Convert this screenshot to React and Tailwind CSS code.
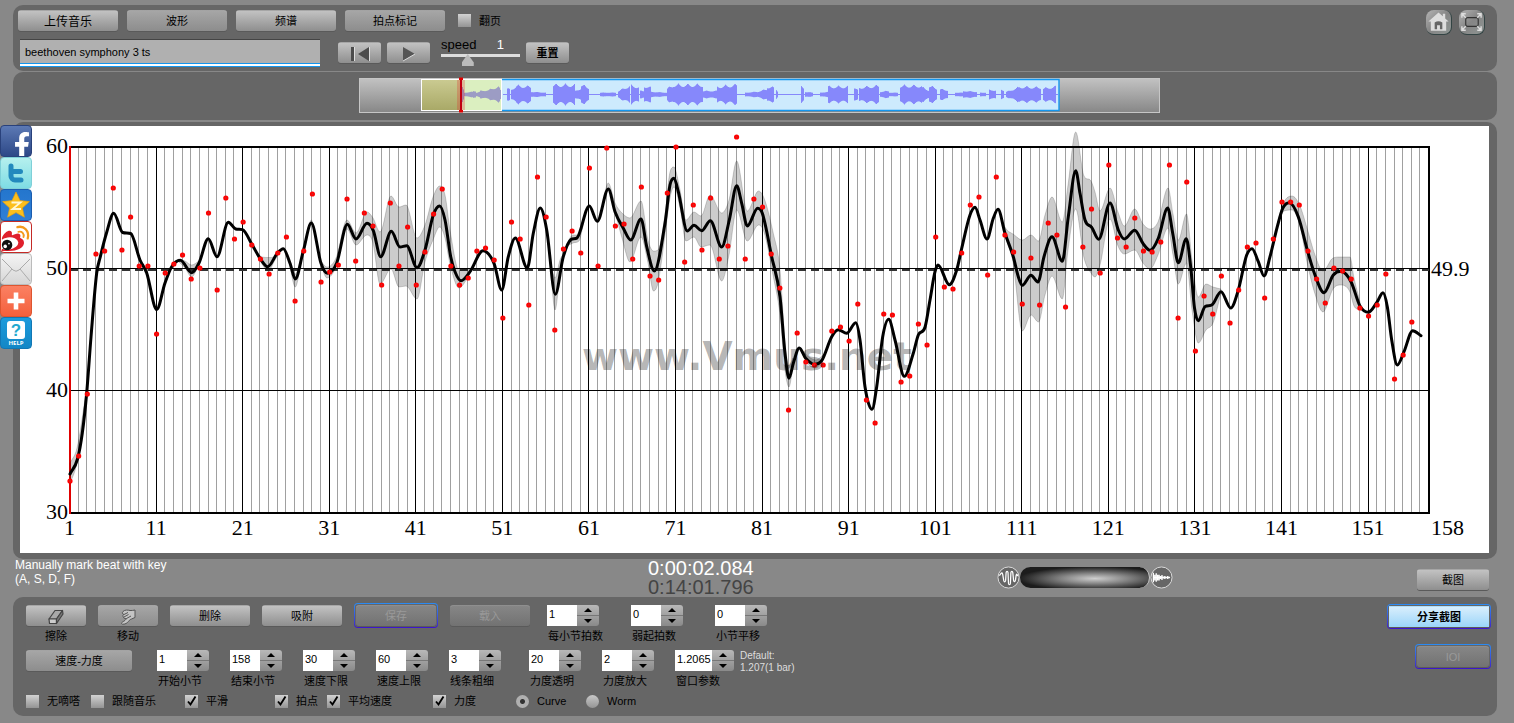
import { useId, useState } from "react";
import clsx from "clsx";
import { FaFacebookF } from "react-icons/fa";

/* ---------- chart data (y values are chart coordinates) ---------- */

const BEATS = [
  481, 456, 394, 254, 251, 188, 250, 217, 266, 266, 334, 273, 264, 255, 279, 268, 213, 290, 198, 239,
  222, 245, 259, 274, 253, 237, 301, 251, 194, 282, 272, 265, 199, 261, 213, 226, 285, 203, 266, 227,
  285, 252, 214, 189, 266, 285, 278, 251, 248, 260, 318, 222, 239, 305, 177, 217, 330, 249, 231, 253,
  168, 266, 148, 226, 224, 259, 187, 276, 280, 193, 147, 262, 205, 250, 198, 259, 246, 137, 259, 199,
  207, 254, 288, 410, 333, 362, 365, 365, 331, 327, 341, 304, 400, 423, 314, 315, 382, 376, 324, 345,
  237, 287, 289, 253, 205, 197, 275, 177, 235, 252, 304, 258, 305, 223, 235, 307, null, 247, 209, 273,
  165, 238, 247, 218, 251, 252, 242, 165, 318, 182, 351, 296, 314, 276, 323, 290, 247, 243, 298, 239,
  202, 202, 205, 251, 279, 303, 268, 271, 279, 308, 316, 305, 274, 379, 355, 322,
];

const CURVE = [
  [70, 474], [77.5, 459], [82.3, 433], [86.7, 393], [91, 337], [96.7, 273], [100, 258], [106.5, 233],
  [113.7, 213.3], [122.7, 232.5], [130.7, 233.5], [140, 260], [146.7, 273], [156.7, 309.5], [165, 283],
  [171.7, 266.7], [180.3, 260.3], [191.7, 272.7], [199, 263], [208.3, 238.7], [217, 256.7], [228.3, 222.3],
  [235.7, 229], [242.5, 229.6], [251.7, 244], [260.7, 259.3], [267.7, 266.7], [277.3, 253.3], [283.3, 248.7],
  [290, 263.3], [295.3, 279], [303.3, 251], [311.3, 223], [321, 263.3], [327.3, 273.3], [336.7, 263],
  [347.3, 224.3], [356, 239], [367, 223.3], [373.3, 230.7], [380.7, 256.7], [391.3, 231.3], [400, 247],
  [406.7, 245.7], [417, 267.7], [425, 250], [433.3, 215], [439.7, 206], [445, 220], [450.7, 256.7],
  [455, 271.7], [461, 280.7], [470, 271.7], [483, 250.7], [494, 263.3], [501.7, 290], [508.3, 256.7],
  [515.3, 238], [527.3, 268], [533.3, 233.3], [540.3, 208], [546.7, 230], [555.3, 294.3], [563.3, 256.7],
  [571, 239.5], [577, 238], [589.3, 206], [597.3, 221.3], [608.3, 189], [615, 211.7], [623.3, 228.3],
  [630.7, 240], [641, 219], [646.7, 246.7], [654.3, 271], [665, 223.3], [670, 185], [674, 178.3],
  [678.3, 191.7], [687.3, 231], [694, 225.3], [701.7, 230.7], [710.3, 220.7], [721.7, 247], [729.3, 220],
  [736.7, 185.7], [741.7, 203.3], [747.3, 226], [757.7, 208.3], [762.3, 213.3], [771.7, 256.7],
  [780, 296.7], [785, 353.3], [789, 378.3], [793.3, 363.3], [799.3, 348], [805.7, 358.3], [814.3, 364.3],
  [821.7, 360.7], [831.7, 336.7], [838.3, 329.7], [846.7, 333.3], [855.7, 322.7], [860, 340],
  [865, 386.7], [872, 409.3], [876.7, 386.7], [882.7, 336.7], [888.7, 319.3], [895, 340], [904.3, 376.3],
  [913.3, 353.3], [918.3, 335], [925, 327.3], [930, 300], [935, 271.7], [938, 265], [949.3, 284.7],
  [956.7, 270], [961.7, 248.3], [970, 215], [975, 207.3], [980, 220], [987, 239], [993.3, 218.3],
  [998, 209.3], [1005, 233.3], [1013.3, 256.7], [1018.3, 276.7], [1022.3, 285.3], [1031, 275.3],
  [1038, 282], [1044, 256.7], [1052, 236.7], [1062.3, 261.3], [1068.3, 216.7], [1075.7, 170.7],
  [1080, 193.3], [1085, 220], [1091.7, 227.3], [1098.7, 239.3], [1110, 203], [1118.3, 230], [1124.3, 239],
  [1134.7, 230.3], [1143.3, 244], [1150, 250.3], [1158.3, 238.3], [1167.7, 208], [1172.7, 233.3],
  [1178.3, 262.7], [1186.3, 238.7], [1190.7, 266.7], [1194.5, 308], [1198.3, 320.7], [1205, 306.7],
  [1212.3, 304.7], [1221, 291.7], [1230.7, 308], [1238.3, 290], [1246.7, 255], [1252, 248.7],
  [1258.3, 261.7], [1264, 276], [1270, 256.7], [1277.3, 226.7], [1282.7, 208.3], [1289.3, 202.7],
  [1298.3, 216.7], [1307.3, 250], [1315, 275], [1324, 292.7], [1333.3, 275], [1340.7, 271.3],
  [1351, 281.7], [1360, 306], [1368.3, 312.3], [1376.7, 302.7], [1383, 292.7], [1387.3, 306.7],
  [1391.7, 340], [1397.3, 365], [1404, 351.7], [1412.7, 330.7], [1421, 335.7],
];

// [x, upper edge, lower edge]
const BANDS = [
  [[70, 463, 484], [77, 448, 462], [86, 393, 395]],
  [[178, 259, 261], [185, 261, 268], [191.7, 265, 277], [199, 261, 264]],
  [[257, 253, 255], [262, 257, 264], [268, 257.5, 271], [275, 257, 260], [281, 249, 250]],
  [[289, 260, 262], [295.3, 274, 287], [302, 254, 257]],
  [[305, 243, 245], [311.3, 220, 224], [317, 244, 246]],
  [[320, 260, 262], [327, 267, 278], [336, 258, 267], [347, 220, 229], [356, 233, 245], [367, 212, 235],
    [373, 218, 243], [380, 232, 284], [391, 196, 269], [399, 207, 287], [406, 205, 286], [417, 238, 299],
    [425, 225, 262], [433, 197, 240], [439.7, 186, 227], [445, 195, 238], [450, 230, 264], [459, 270, 288],
    [470, 269, 274]],
  [[547, 230, 232], [551, 262, 275], [555, 278, 310], [560, 260, 275], [564, 253, 255]],
  [[567, 243, 246], [573, 235, 243], [579, 235, 241], [583, 224, 226]],
  [[602, 207, 209], [608.3, 183, 190], [615, 203, 212], [622, 213, 238], [630, 218, 262], [641, 201, 237],
    [648, 240, 263], [653.5, 251, 291], [658, 250, 283], [665, 215, 235], [670, 172, 198], [674, 167, 187],
    [680, 190, 208], [686, 220, 241], [694, 212, 237], [701, 216, 247], [710, 195, 245], [721.7, 213, 281],
    [729, 200, 255], [736.7, 161, 210], [747.3, 211, 241], [758.5, 191, 225], [764, 198, 232],
    [773, 232, 275], [780, 270, 315], [785, 342, 370], [789, 366, 387], [793, 358, 366]],
  [[800, 348, 350], [809, 357, 365], [816, 360, 368], [824, 354, 357]],
  [[1002, 222, 225], [1007, 230, 242], [1013, 234, 262], [1022.3, 240, 331], [1031, 235, 315],
    [1038.5, 241, 322], [1045, 215, 295], [1052, 197, 276], [1062.3, 222, 299], [1068, 185, 250],
    [1075.7, 132, 209], [1084, 176, 258], [1091, 181, 273], [1095, 192, 277], [1100, 211, 265],
    [1110, 188, 219], [1118, 212, 246], [1124.3, 226, 254], [1134.7, 209, 250], [1143, 224, 263],
    [1150, 229, 269], [1158, 222, 255], [1168, 188, 228], [1173, 214, 255], [1178.3, 240, 284],
    [1186.5, 214, 263], [1192, 260, 310], [1198.3, 297, 343], [1206, 284, 330], [1213, 287, 323],
    [1221, 289, 293]],
  [[1277, 224, 227], [1284, 202, 211], [1292, 196, 210], [1300, 206, 226], [1307, 228, 262],
    [1315, 255, 294], [1323, 271, 312], [1333, 258, 289], [1340, 257, 285], [1350, 257, 292],
    [1354, 278, 306], [1360, 302, 310]],
];

/* monotone cubic through the points, so peaks are never overshot */
const smooth = (pts, start = "M") => {
  const n = pts.length;
  const slope = [];
  for (let i = 0; i < n - 1; i++) {
    slope.push((pts[i + 1][1] - pts[i][1]) / (pts[i + 1][0] - pts[i][0]));
  }
  const tan = pts.map((_, i) => {
    if (i === 0) return slope[0];
    if (i === n - 1) return slope[n - 2];
    const a = slope[i - 1];
    const b = slope[i];
    if (a * b <= 0) return 0;
    return Math.sign(a) * Math.min(Math.abs(a + b) / 2, 3 * Math.abs(a), 3 * Math.abs(b));
  });
  let d = `${start}${pts[0][0]} ${pts[0][1]}`;
  for (let i = 0; i < n - 1; i++) {
    const [x0, y0] = pts[i];
    const [x1, y1] = pts[i + 1];
    const h = (x1 - x0) / 3;
    d += `C${(x0 + h).toFixed(1)} ${(y0 + tan[i] * h).toFixed(1)} ${(x1 - h).toFixed(1)} ${(y1 - tan[i + 1] * h).toFixed(1)} ${x1} ${y1}`;
  }
  return d;
};

const bandPath = (band) => {
  const top = smooth(band.map(([x, up]) => [x, up]));
  const bottom = smooth(band.map(([x, , low]) => [x, low]).reverse(), "L");
  return `${top}${bottom}Z`;
};

const beatX = (n) => 69.5 + (n - 1) * 8.657;

function TempoChart() {
  const bars = Array.from({ length: 156 }, (_, i) => i + 2);
  return (
    <svg viewBox="20 126 1469 427" className="block w-full bg-white">
      {bars.map((n) => {
        const main = n % 10 === 1;
        const x = Math.floor(beatX(n)) + 0.5;
        return (
          <line key={n} x1={x} x2={x} y1="147" y2="513" stroke={main ? "#000" : "#a0a0a0"} strokeWidth="1" />
        );
      })}
      <path d="M70 390.5H1429" stroke="#000" />
      <path d="M69 147H1430M69 513H1430M1429 147V513" stroke="#000" strokeWidth="2" />
      <path d="M70 268.5H1429" stroke="#000" />
      <path d="M70 270H1429" stroke="#333" strokeWidth="2" strokeDasharray="8 5" />
      <path d="M70 146V514" stroke="#e00000" strokeWidth="2" />

      {BANDS.map((band) => (
        <path key={band[0][0]} d={bandPath(band)} fill="#000" fillOpacity="0.2" stroke="#000" strokeOpacity="0.25" strokeWidth="0.7" />
      ))}
      <path d={smooth(CURVE)} fill="none" stroke="#000" strokeWidth="3" strokeLinecap="round" strokeLinejoin="round" />

      {BEATS.map((y, i) =>
        y === null ? null : (
          <g key={i}>
            <circle cx={beatX(i + 1) + 0.5} cy={y} r="2.6" fill="#f00" />
            <circle cx={beatX(i + 1) + 0.5} cy={y} r="0.8" fill="#b33" />
          </g>
        )
      )}

      <text x="582" y="370" fontSize="39" fontWeight="700" fillOpacity="0.3" className="font-['DejaVu_Sans',sans-serif]">
        www.Vmus.net
      </text>

      <g fontSize="22" className="font-['Liberation_Serif',serif]">
        {[60, 50, 40, 30].map((v, i) => (
          <text key={v} x="68" y={153 + i * 122} textAnchor="end">{v}</text>
        ))}
        {Array.from({ length: 16 }, (_, i) => i * 10 + 1).map((n) => (
          <text key={n} x={beatX(n)} y="535" textAnchor="middle">{n}</text>
        ))}
        <text x="1431" y="535">158</text>
        <text x="1431" y="276">49.9</text>
      </g>
    </svg>
  );
}

/* ---------- overview waveform ---------- */

// [from, to, amplitude at start, amplitude at end]
const WAVE_PLAYED = [
  [462, 463, 7, 5], [464, 472, 1, 2], [473, 475, 3, 3], [476, 479, 1, 2], [480, 487, 3, 4], [488, 497, 4, 8],
  [498, 500, 8, 4],
];

const WAVE = [
  [507, 509, 6, 5], [511, 515, 5, 8], [516, 530, 9, 8], [531, 545, 2, 1], [553, 574, 10, 10],
  [575, 580, 3, 6], [581, 588, 10, 7], [600, 615, 1, 1], [618, 629, 3, 9], [631, 638, 9, 8], [640, 643, 3, 3],
  [644, 650, 9, 7], [651, 666, 2, 1], [667, 672, 6, 9], [673, 702, 10, 10], [703, 716, 3, 3], [717, 736, 8, 10],
  [745, 756, 1, 2], [757, 766, 2, 5], [767, 773, 8, 7], [776, 777, 5, 3], [801, 803, 8, 7], [805, 812, 2, 1],
  [820, 827, 1, 2], [828, 847, 8, 8], [854, 857, 7, 4], [859, 878, 7, 9], [880, 888, 2, 3], [889, 897, 1, 1],
  [900, 921, 9, 9], [922, 928, 7, 4], [929, 936, 9, 6], [940, 947, 5, 4], [955, 962, 1, 1], [963, 976, 3, 2],
  [980, 985, 1, 1], [989, 995, 4, 4], [1001, 1003, 5, 4], [1006, 1018, 2, 7], [1019, 1040, 8, 7],
  [1043, 1055, 6, 8],
];

const wavePath = (parts) => {
  let d = "";
  parts.forEach(([from, to, a, b]) => {
    for (let x = from; x <= to; x++) {
      const base = a + ((b - a) * (x - from)) / Math.max(1, to - from);
      const jitter = Math.abs(Math.sin(x * 12.9)) * base * 0.35;
      const amp = Number((base + 1 - jitter).toFixed(1));
      d += `M${x + 0.5} ${94.5 - amp}V${94.5 + amp}`;
    }
  });
  return d;
};

function Overview() {
  return (
    <svg viewBox="358 77 803 37" className="block w-[803px] max-w-full">
      <defs>
        <linearGradient id="track" x1="0" x2="0" y1="0" y2="1">
          <stop offset="0" stopColor="#c2c2c2" />
          <stop offset="1" stopColor="#878787" />
        </linearGradient>
        <linearGradient id="played" x1="0" x2="0" y1="0" y2="1">
          <stop offset="0" stopColor="#cbcb92" />
          <stop offset="1" stopColor="#a8a866" />
        </linearGradient>
      </defs>
      <rect x="359.5" y="78.5" width="800" height="34" fill="url(#track)" stroke="#c6c6c6" />
      <rect x="421" y="79" width="638" height="32" fill="#cdeafd" />
      <path d="M502 79.5H1059V110.5H502" fill="none" stroke="#1496ee" strokeWidth="1.4" />
      <rect x="421" y="79" width="40" height="32" fill="url(#played)" />
      <rect x="461" y="79" width="41" height="32" fill="#dbefc0" />
      <path d={`M462 94.5H501${wavePath(WAVE_PLAYED)}`} stroke="#9c9cc4" />
      <path d={`M503 94.5H1058${wavePath(WAVE)}`} stroke="#8688fb" />
      <rect x="421.5" y="79.5" width="80" height="31" fill="none" stroke="#fff" />
      <rect x="457" y="80" width="8" height="30" fill="#e02020" fillOpacity="0.25" />
      <path d="M461 79V112" stroke="#c00010" strokeWidth="2" />
      <path d="M459 77.500h4v2.500h-4zM459 110h4v2.500h-4z" fill="#e00000" />
    </svg>
  );
}

/* ---------- controls ---------- */

const TONES = {
  light: "from-[#c2c2c2] to-[#8f8f8f] text-black",
  dim: "from-[#a6a6a6] to-[#8d8d8d] text-black",
  off: "from-[#868686] to-[#727272] text-[#999]",
  blue: "from-[#d8eefc] to-[#9bd5f9] text-black font-bold rounded-none",
};

function Btn({ tone = "light", className, children, ...rest }) {
  return (
    <button
      type="button"
      disabled={tone === "off"}
      className={clsx(
        "flex h-[21px] shrink-0 items-center justify-center rounded-[3px] border-t border-white/20 bg-linear-to-b pt-px leading-none shadow-[0_1px_0_#5a5a5a]",
        TONES[tone],
        className
      )}
      {...rest}
    >
      {children}
    </button>
  );
}

// blue outline drawn round highlighted buttons
function Ring({ children }) {
  return (
    <div className="-my-0.5 rounded-[4px] bg-linear-to-b from-[#2a8cf4] to-[#3c10cc] p-px">
      <div className="rounded-[3px] bg-[#666] p-px">{children}</div>
    </div>
  );
}

function Check({ label, className, checked = false }) {
  const [on, setOn] = useState(checked);
  return (
    <label className={clsx("flex shrink-0 items-center gap-2 text-[11px] leading-[14px] text-black", className)}>
      <span className="relative h-[13px] w-[13px]">
        <input
          type="checkbox"
          checked={on}
          onChange={(e) => setOn(e.target.checked)}
          className="block h-[13px] w-[13px] appearance-none bg-linear-to-b from-[#d2d2d2] to-[#949494]"
        />
        {on && (
          <svg viewBox="0 0 13 13" className="pointer-events-none absolute inset-0 h-[13px] w-[13px]">
            <path d="M3 6.500 L5.500 9.500 L10.500 1.500" fill="none" stroke="#000" strokeWidth="1.900" />
          </svg>
        )}
      </span>
      {label}
    </label>
  );
}

function Radio({ label, value, mode, setMode, className }) {
  return (
    <label className={clsx("flex shrink-0 items-center gap-2 text-[11px] leading-[14px] text-black", className)}>
      <input
        type="radio"
        name="mode"
        checked={mode === value}
        onChange={() => setMode(value)}
        className="h-[13px] w-[13px] appearance-none rounded-full bg-linear-to-b from-[#c8c8c8] to-[#959595] checked:bg-[radial-gradient(circle,#333_2px,#b0b0b0_3px)]"
      />
      {label}
    </label>
  );
}

function Stepper({ label, value, wide, className }) {
  const id = useId();
  const [val, setVal] = useState(value);
  const step = (by) => setVal(String(Number(val) + by));
  return (
    <div className={clsx("shrink-0", className)}>
      <div className="flex h-[21px]">
        <input
          id={id}
          type="text"
          value={val}
          onChange={(e) => setVal(e.target.value)}
          className={clsx("h-[21px] bg-white pb-1 pl-0.5 text-[11px] text-black outline-none", wide ? "w-[37px]" : "w-[30px]")}
        />
        <div className="flex w-[22px] flex-col overflow-hidden rounded-r-[3px] bg-linear-to-b from-[#b8b8b8] to-[#8a8a8a]">
          <button type="button" aria-label="+" onClick={() => step(1)} className="flex flex-1 items-center justify-center border-b border-[#777]">
            <svg viewBox="0 0 8 4" className="h-1 w-2"><path d="M0 4L4 0L8 4Z" /></svg>
          </button>
          <button type="button" aria-label="-" onClick={() => step(-1)} className="flex flex-1 items-center justify-center">
            <svg viewBox="0 0 8 4" className="h-1 w-2"><path d="M0 0L4 4L8 0Z" /></svg>
          </button>
        </div>
      </div>
      <label htmlFor={id} className="mt-[3px] block pl-px text-[11px] leading-[14px] text-black">{label}</label>
    </div>
  );
}

/* ---------- social bar ---------- */

function StarIcon() {
  return (
    <svg viewBox="1 1 30 30" className="h-full w-full">
      <path d="M16 3l4 8.600 9.400 1-7 6.300 2 9.300L16 23.600l-8.400 4.600 2-9.300-7-6.300 9.400-1z" fill="#fbbf1d" stroke="#e9a10c" strokeWidth="0.700" />
      <path d="M11.500 13.500h9l-8 6.500h8.500" fill="none" stroke="#fff7d6" strokeWidth="1.800" />
    </svg>
  );
}

function WeiboIcon() {
  return (
    <svg viewBox="0 0 32 32" className="h-full w-full">
      <path d="M1 17C3 11 9 8 11 10c1.500 1.500 0 4 1 4 2 0 6-3 8-1 1.500 1.500 0 3.500.5 4 2 .8 4.500 2.500 4 6C23.500 28 17 31 9 31H1z" fill="#e0202c" />
      <ellipse cx="8" cy="23" rx="10.500" ry="6.500" fill="#fff" transform="rotate(-8 8 23)" />
      <circle cx="6.500" cy="24.500" r="5.600" fill="#111" />
      <circle cx="4.500" cy="26" r="1.900" fill="#fff" />
      <circle cx="8.500" cy="23" r="0.900" fill="#fff" />
      <path d="M18.500 10.500c4-1 6.500 2 5.500 5.500" fill="none" stroke="#f39a1d" strokeWidth="2" strokeLinecap="round" />
      <path d="M17.500 5.500c7-2 13 4 11 12" fill="none" stroke="#f39a1d" strokeWidth="2.400" strokeLinecap="round" />
    </svg>
  );
}

function SocialBar() {
  const tile = "flex h-8 w-8 overflow-hidden rounded-[4px] border";
  return (
    <nav className="absolute top-[125px] left-0 flex flex-col">
      <a href="#facebook" aria-label="Facebook" className={clsx(tile, "items-end justify-end border-[#29417b] bg-linear-to-b from-[#5c79b4] to-[#2d4887] text-white")}>
        <FaFacebookF size={26} className="-mr-1 -mb-0.5 shrink-0" />
      </a>
      <a href="#twitter" aria-label="Twitter" className={clsx(tile, "border-[#7fd0d8] bg-linear-to-b from-[#b5f0ee] to-[#7edce4]")}>
        <svg viewBox="0 0 30 30" className="h-full w-full">
          <path d="M10 8v10a4 4 0 0 0 4 4h6M10 13.500h9.500" fill="none" stroke="#2289bd" strokeWidth="5" strokeLinecap="round" />
        </svg>
      </a>
      <a href="#qzone" aria-label="QZone" className={clsx(tile, "border-[#1b5cae] bg-linear-to-b from-[#2476cd] to-[#2f7fd6]")}>
        <StarIcon />
      </a>
      <a href="#weibo" aria-label="Weibo" className={clsx(tile, "border-[#c42a26] bg-white")}>
        <WeiboIcon />
      </a>
      <a href="#mail" aria-label="Mail" className={clsx(tile, "border-[#bbb] bg-linear-to-b from-[#f4f4f4] to-[#d6d6d6]")}>
        <svg viewBox="0 0 30 30" className="h-full w-full" fill="none" stroke="#aaa" strokeWidth="1">
          <path d="M1 5l11 11q3 2.500 6 0L29 5M1 27l10-12M29 27L19 15" />
        </svg>
      </a>
      <a href="#more" aria-label="More" className={clsx(tile, "border-[#dd5530] bg-linear-to-b from-[#fb8062] to-[#f4603c]")}>
        <svg viewBox="0 0 30 30" className="h-full w-full">
          <path d="M15 6.500v17M6.500 15h17" stroke="#fff" strokeWidth="4.600" />
        </svg>
      </a>
      <a href="#help" className={clsx(tile, "flex-col items-center gap-px border-[#1277b4] bg-linear-to-b from-[#1c9bdc] to-[#1387c6] pt-[3px] text-white")}>
        <span className="flex h-[18px] w-[18px] items-center justify-center rounded-[3px] bg-white text-[17px] leading-none font-bold text-[#23a9cf]">?</span>
        <span className="font-['Open_Sans',sans-serif] text-[6px] leading-[7px] font-bold">HELP</span>
      </a>
    </nav>
  );
}

/* ---------- icons ---------- */

function EraserIcon() {
  return (
    <svg viewBox="0 0 18 16" className="h-4 w-[18px]" fill="#a8a8a8" stroke="#444" strokeWidth="1.200" strokeLinejoin="round">
      <path d="M8 1.500h7.500L9.500 10H2z" />
      <path d="M2 10h7.500v4.500H2.500z" fill="#ccc" />
      <path d="M15.500 1.500l.5 3.500L9.500 14.500V10z" fill="#777" />
    </svg>
  );
}

function SmudgeIcon() {
  return (
    <svg viewBox="0 0 18 16" className="h-4 w-[18px]" fill="#c4c4c4" stroke="#555" strokeWidth="1" strokeLinejoin="round">
      <path d="M4 2.500C6 .5 9 1 11 1.500c2 0 3 0 5-.5v7.500L12.500 10c-2 .5-2.500 2-4 3.500C7 15 3 16 2.500 14.500S6 12.500 7.500 9.500c-1.500.5-3.500 0-2.500-1.500C3 8 3.500 6 5 5.500 3 5 3 3.500 4 2.500z" />
      <path d="M5 5.500l4-2M5 8l4.500-2.500M7.500 9.500L12 7" fill="none" />
    </svg>
  );
}

const IconTile = ({ label, children }) => (
  <button type="button" aria-label={label} className="h-[25px] w-[26px] rounded-[8px] border-r border-b border-[#344] bg-linear-to-br from-[#b5b5b5] via-[#858585] to-[#8f9694]">
    {children}
  </button>
);

const panel = "rounded-[10px] bg-[#666]";

const STEPS_A = [
  ["开始小节", "1"], ["结束小节", "158"], ["速度下限", "30"], ["速度上限", "60"], ["线条粗细", "3"],
];

function App() {
  const [mode, setMode] = useState("curve");
  const [title, setTitle] = useState("beethoven symphony 3 ts");

  return (
    <div className="relative min-h-screen bg-[#888] pt-[5px] pr-[17px] pb-[7px] pl-[13px] font-['Liberation_Sans','Noto_Sans_CJK_SC',sans-serif]">

      {/* Top bar */}
      <header className={clsx(panel, "mb-px flex h-[66px] justify-between pt-[5px] pr-3 pl-[5px]")}>
        <div>
          <div className="flex items-center gap-[9px] text-[11px]">
            <Btn className="w-[100px] text-xs">上传音乐</Btn>
            <Btn tone="dim" className="w-[100px]">波形</Btn>
            <Btn className="w-[100px]">频谱</Btn>
            <Btn tone="dim" className="w-[100px]">拍点标记</Btn>
            <Check label="翻页" className="pl-1" />
          </div>
          <div className="mt-2 flex items-start pl-0.5 text-[11px]">
            <div className="h-7 w-[300px] border-b border-[#1496ee] bg-white pb-0.5">
              <input
                type="text"
                aria-label="title"
                value={title}
                onChange={(e) => setTitle(e.target.value)}
                className="block h-[25px] w-full border-t border-b border-t-[#444] border-b-[#1496ee] bg-[#b0b0b0] px-[5px] text-black outline-none"
              />
            </div>
            <div className="mt-[3px] ml-[18px] flex gap-[6px]">
              <Btn className="w-[43px]" aria-label="rewind">
                <svg viewBox="0 0 22 16" className="h-4 w-[22px]" fill="#4c4c4c">
                  <path d="M2 1h3v14H2zM20 1v14L9 8z" />
                  <path d="M5.500 1v14M20.500 1v14" stroke="#ddd" strokeWidth="1" />
                </svg>
              </Btn>
              <Btn className="w-[43px]" aria-label="play">
                <svg viewBox="0 0 14 16" className="h-4 w-[14px]">
                  <path d="M1 1v14l12-7z" fill="#555" />
                  <path d="M1 15l12-7" stroke="#ddd" strokeWidth="1" />
                </svg>
              </Btn>
            </div>
            <div className="ml-[11px] w-[79px]">
              <div className="flex justify-between pr-4 text-[13px] leading-3">
                <label htmlFor="speed">speed</label>
                <span className="text-white">1</span>
              </div>
              <input
                id="speed"
                type="range"
                defaultValue="31"
                className="mt-[3px] block h-3 w-full appearance-none bg-[linear-gradient(#ddd,#ddd)] bg-[length:100%_3px] bg-top bg-no-repeat [&::-webkit-slider-thumb]:h-3 [&::-webkit-slider-thumb]:w-3 [&::-webkit-slider-thumb]:appearance-none [&::-webkit-slider-thumb]:bg-[#bbb] [&::-webkit-slider-thumb]:[clip-path:polygon(50%_0,100%_70%,100%_100%,0_100%,0_70%)]"
              />
            </div>
            <Btn className="mt-[3px] ml-[6px] w-[43px] font-bold">重置</Btn>
          </div>
        </div>
        <div className="flex gap-[7px]">
          <IconTile label="home">
            <svg viewBox="0 0 26 25" className="h-full w-full" fill="#ddd">
              <path d="M13 2.500L2.500 12H5v9.500h16V12h2.500L20 8.800V4h-2.500v2.600z" />
              <path d="M9 20v-7q4-2.500 8 0v7h-2.500v-4h-3v4z" fill="#666" />
            </svg>
          </IconTile>
          <IconTile label="fullscreen">
            <svg viewBox="0 0 26 25" className="h-full w-full" fill="none" stroke="#ddd" strokeWidth="1.500">
              <rect x="7" y="8" width="13" height="9" rx="2" stroke="#333" strokeWidth="1.200" />
              <path d="M3 8V4h4M3 4l4 4M19 4h4v4M23 4l-4 4M3 17v4h4M3 21l4-4M19 21h4v-4M23 21l-4-4" />
            </svg>
          </IconTile>
        </div>
      </header>

      {/* Overview */}
      <section className={clsx(panel, "mb-0.5 flex h-12 items-start justify-center pt-[5px] pl-2")}>
        <Overview />
      </section>

      {/* Chart */}
      <main className={clsx(panel, "pt-1 pr-2 pb-1.5 pl-[7px]")}>
        <TempoChart />
      </main>

      {/* Status */}
      <section className="grid h-[38px] grid-cols-[635fr_349fr_420fr_80fr] items-start">
        <p className="-mt-px pl-0.5 text-xs leading-[14px] text-white">
          Manually mark beat with key
          <br />
          (A, S, D, F)
        </p>
        <div className="text-[20px] leading-[19px] text-white">
          <div>0:00:02.084</div>
          <div className="text-[#444]">0:14:01.796</div>
        </div>
        <div className="flex items-center pt-[7px]">
          <svg viewBox="0 0 24 24" className="h-[23px] w-[23px]" fill="none" stroke="#fff">
            <circle cx="12" cy="12" r="11" fill="#666" stroke="#ddd" />
            <path d="M2.500 10l1.500-2c1-1.500 1.500-1 2 1l1 6c.5 2 1.500 2 2 0l.5-8c.3-2 1.700-2 2 0l.5 11c.2 2 1.800 2 2 0l.5-11c.3-2 1.700-2 2 0l.8 8c.4 2 1.600 1.500 2-.5l.7-5c.5-1.500 1-1 1.500 1" strokeWidth="1.300" />
          </svg>
          <input
            type="range"
            aria-label="zoom"
            className="h-[21px] w-[130px] appearance-none rounded-full border-r border-[#ccc] bg-[radial-gradient(ellipse_at_58%_55%,#cfcfcf,#888_30%,#1c1c1c_72%)] [&::-webkit-slider-thumb]:appearance-none"
          />
          <svg viewBox="0 0 24 24" className="h-[23px] w-[23px]" fill="none" stroke="#fff">
            <circle cx="12" cy="12" r="11" fill="#666" stroke="#ddd" />
            <path d="M3.500 7v10M5 9v6M6.500 7.500v9M8 9v6M9.500 9v6M11 10.500v3M12.500 9.500v5M14 11v2M15.500 10.500v3M17 11.500v1M18.500 10.500v3M20 11.500v1M3 12h18" strokeWidth="1.400" />
          </svg>
        </div>
        <div className="flex justify-end pt-2.5 pr-2 text-[11px]">
          <Btn className="w-[72px]">截图</Btn>
        </div>
      </section>

      {/* Settings */}
      <footer className={clsx(panel, "flex justify-between pt-2 pr-[6px] pb-2 pl-[13px] text-[11px]")}>
        <div>
          <div className="flex h-[45px] items-start gap-3">
            <div className="w-[60px] text-center leading-[14px]">
              <Btn className="mb-[3px] w-full" aria-label="擦除"><EraserIcon /></Btn>
              擦除
            </div>
            <div className="w-[60px] text-center leading-[14px]">
              <Btn tone="dim" className="mb-[3px] w-full" aria-label="移动"><SmudgeIcon /></Btn>
              移动
            </div>
            <Btn className="w-20">删除</Btn>
            <Btn className="w-20">吸附</Btn>
            <Ring><Btn tone="off" className="w-20">保存</Btn></Ring>
            <Btn tone="off" className="w-20">载入</Btn>
            <div className="ml-[5px] flex">
              <Stepper label="每小节拍数" value="1" className="w-[84px]" />
              <Stepper label="弱起拍数" value="0" className="w-[84px]" />
              <Stepper label="小节平移" value="0" className="w-[84px]" />
            </div>
          </div>

          <div className="flex h-11 items-start">
            <Btn tone="dim" className="mr-[25px] w-[106px]">速度-力度</Btn>
            {STEPS_A.map(([label, value]) => (
              <Stepper key={label} label={label} value={value} className="w-[73px]" />
            ))}
            <div className="ml-[7px] flex">
              <Stepper label="力度透明" value="20" className="w-[73px]" />
              <Stepper label="力度放大" value="2" className="w-[73px]" />
              <Stepper label="窗口参数" value="1.2065" wide className="w-[65px]" />
            </div>
            <p className="text-[10px] leading-3 text-[#ddd]">
              Default:
              <br />
              1.207(1 bar)
            </p>
          </div>

          <div className="flex">
            <Check label="无嘀嗒" className="w-[65px]" />
            <Check label="跟随音乐" className="w-[94px]" />
            <Check label="平滑" className="w-[90px]" checked />
            <Check label="拍点" className="w-[52px]" checked />
            <Check label="平均速度" className="w-[106px]" checked />
            <Check label="力度" className="w-[83px]" checked />
            <Radio label="Curve" value="curve" mode={mode} setMode={setMode} className="w-[70px]" />
            <Radio label="Worm" value="worm" mode={mode} setMode={setMode} />
          </div>
        </div>

        <div className="flex flex-col items-end gap-[19px] pt-px">
          <Ring><Btn tone="blue" className="w-[100px]">分享截图</Btn></Ring>
          <Ring><Btn tone="off" className="w-[72px]">IOI</Btn></Ring>
        </div>
      </footer>

      <SocialBar />
    </div>
  );
}

export default App;
